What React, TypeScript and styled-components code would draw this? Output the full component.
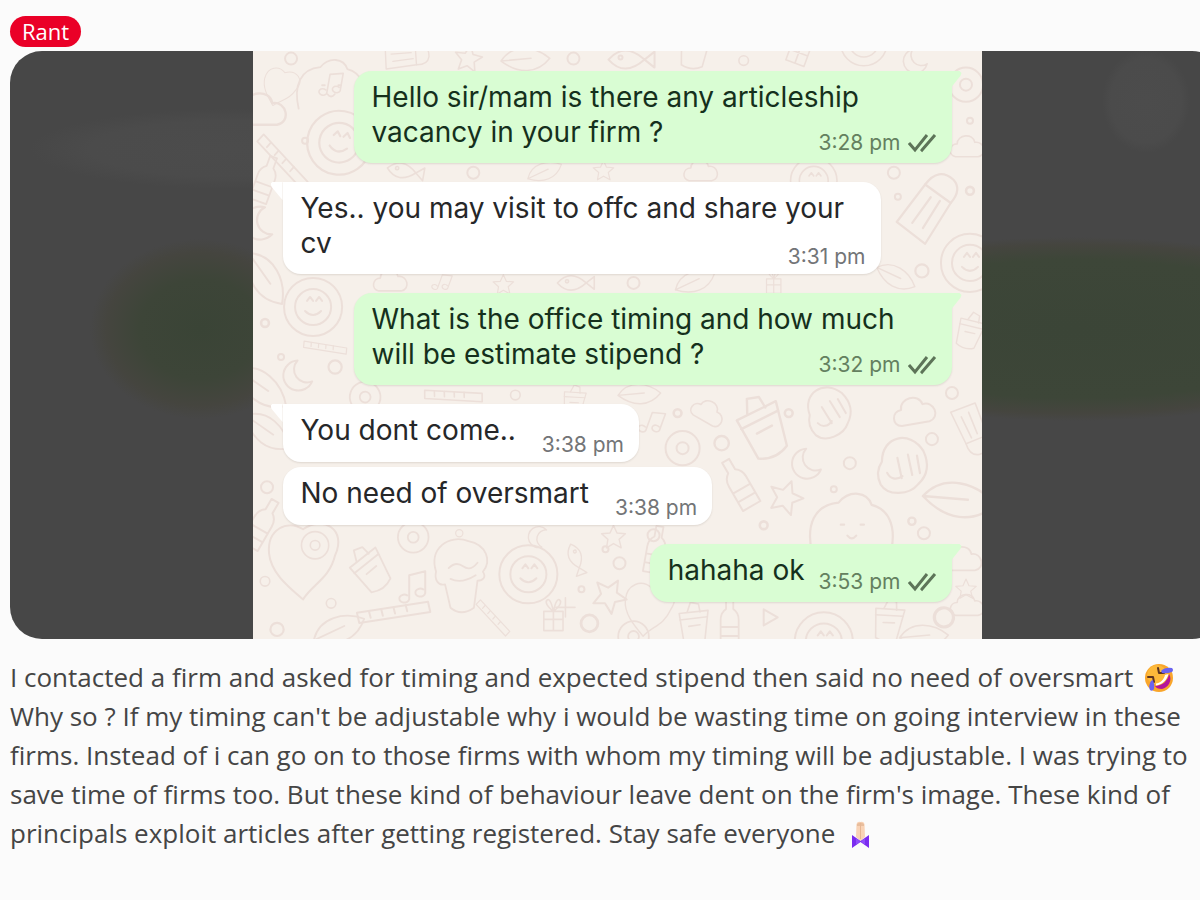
import React from "react";
import styled, { createGlobalStyle, css } from "styled-components";

const GlobalStyle = createGlobalStyle`
  * { box-sizing: border-box; }
  body {
    margin: 0;
    background: #fbfbfb;
    color: #454545;
    font-family: "Open Sans", "Noto Sans", sans-serif;
    overflow-x: hidden;
  }
`;

const Post = styled.article`
  display: flex;
  flex-direction: column;
  align-items: flex-start;
  padding: 16px 0 24px 10px;
`;

const Flair = styled.a`
  padding: 0 12px;
  margin-bottom: 4px;
  border-radius: 16px;
  background: #ea0027;
  color: #fff;
  font-size: 22px;
  line-height: 31px;
  text-decoration: none;
`;

const Media = styled.figure`
  display: flex;
  justify-content: center;
  width: calc(100% + 24px);
  margin: 0 0 19px;
  border-radius: 32px;
  overflow: hidden;
  background:
    radial-gradient(ellipse 110px 90px at 190px 278px, #3a4436 0%, #3d4538 55%, #45453f 85%, transparent 100%),
    radial-gradient(ellipse 330px 92px at calc(100% - 150px) 278px, #3b4537 0%, #3d4638 75%, #45453f 92%, transparent 100%),
    radial-gradient(ellipse 200px 40px at 220px 98px, #4c4c4c 0%, #4b4b4b 70%, transparent 100%),
    radial-gradient(ellipse 44px 52px at calc(100% - 78px) 50px, #4c4c4c 0%, #4b4b4b 80%, transparent 100%),
    #474747;
`;

const Chat = styled.div`
  position: relative;
  flex: 0 1 729px;
  display: flex;
  flex-direction: column;
  padding: 20px 30px 37px;
  background: #f6f0ea;
  font-family: Inter, "Open Sans", sans-serif;
`;

const Wallpaper = styled.svg`
  position: absolute;
  inset: 0;
  width: 100%;
  height: 100%;
  fill: none;
  stroke: #ecdfd9;
  stroke-width: 2;
  stroke-linecap: round;
  stroke-linejoin: round;
`;

const ownTail = css`
  border-top-right-radius: 0;
  &::after {
    content: "";
    position: absolute;
    top: 0;
    left: 100%;
    width: 10px;
    height: 16px;
    background: inherit;
    clip-path: polygon(0 0, 80% 0, 100% 12%, 90% 30%, 0 100%);
  }
`;

const theirTail = css`
  border-top-left-radius: 0;
  &::after {
    content: "";
    position: absolute;
    top: 0;
    right: 100%;
    width: 12px;
    height: 18px;
    background: inherit;
    clip-path: polygon(100% 0, 15% 0, 0 10%, 10% 28%, 100% 100%);
  }
`;

const Bubble = styled.div<{ $own?: boolean; $tail?: boolean; $long?: boolean; $follows?: boolean }>`
  position: relative;
  display: grid;
  grid-template-columns: ${(p) => (p.$long ? "1fr" : "auto auto")};
  column-gap: ${(p) => (p.$own ? 14 : 26)}px;
  align-self: ${(p) => (p.$own ? "flex-end" : "flex-start")};
  width: ${(p) => (p.$long ? "598px" : "auto")};
  max-width: 100%;
  min-height: 58px;
  margin-top: ${(p) => (p.$follows ? 5 : 19)}px;
  padding: 9px 15px 0 18px;
  border-radius: 18px;
  background: ${(p) => (p.$own ? "#d9fdd3" : "#ffffff")};
  box-shadow: 0 1px 2px rgba(60, 40, 30, 0.12);
  ${(p) => p.$tail && (p.$own ? ownTail : theirTail)}

  &:nth-of-type(1) { margin-top: 0; }
`;

const Message = styled.p<{ $long?: boolean; $own?: boolean }>`
  grid-area: 1 / 1;
  margin: 0;
  padding-bottom: ${(p) => (p.$long ? 13 : 0)}px;
  color: ${(p) => (p.$own ? "#15301c" : "#262729")};
  font-size: 28px;
  line-height: 35px;
`;

const Meta = styled.div<{ $long?: boolean; $own?: boolean }>`
  grid-area: ${(p) => (p.$long ? "1 / 1" : "1 / 2")};
  place-self: end;
  display: flex;
  align-items: center;
  gap: 7px;
  padding-bottom: ${(p) => (p.$own ? 8 : 5)}px;
  color: ${(p) => (p.$own ? "#64805f" : "#737577")};
  font-size: 21px;
  line-height: 24px;
`;

const Ticks = styled.svg`
  width: 29px;
  height: 20px;
  fill: none;
  stroke: #5d7458;
  stroke-width: 3;
`;

const Body = styled.p`
  margin: 0;
  font-size: 26px;
  line-height: 39px;
`;

const Line = styled.span`
  display: block;
  white-space: nowrap;
`;

const Emoji = styled.svg`
  width: 30px;
  height: 30px;
  margin-left: 4px;
  vertical-align: -6px;
`;

type Message = { own?: boolean; tail?: boolean; follows?: boolean; lines: string[]; time: string };

const messages: Message[] = [
  { own: true, tail: true, lines: ["Hello sir/mam is there any articleship", "vacancy in your firm ?"], time: "3:28 pm" },
  { tail: true, lines: ["Yes.. you may visit to offc and share your", "cv"], time: "3:31 pm" },
  { own: true, tail: true, lines: ["What is the office timing and how much", "will be estimate stipend ?"], time: "3:32 pm" },
  { tail: true, lines: ["You dont come.."], time: "3:38 pm" },
  { follows: true, lines: ["No need of oversmart"], time: "3:38 pm" },
  { own: true, tail: true, lines: ["hahaha ok"], time: "3:53 pm" },
];

// Each doodle is drawn round its own origin and placed by [name, x, y, rotation, scale].
const doodles: Record<string, React.ReactNode> = {
  ring: <><circle r="29" /><circle r="18" /><path d="M-8 4q8 8 16 0M-6-6l3-4 3 4M3-6l3-4 3 4" /></>,
  target: <><circle r="17" /><circle r="6" /></>,
  dot: <circle r="6" />,
  speck: <circle r="3" />,
  hand: <><path d="M-20-2c-8-22 14-36 32-22 8 8 12 18 6 30-4 12-22 20-32 12-6-6-8-12-6-20Z" /><path d="M-8-10l10 16M0-16l10 16M8-18l8 14M-12 6c4 4 10 4 14-2" /></>,
  moon: <path d="M-4-14a15 15 0 1 0 18 18a13 13 0 0 1-18-18Z" />,
  star: <path d="M0-17l5 11 12 1-9 8 3 12-11-6-10 6 2-12-9-8 12-1Z" />,
  cup: <><path d="M-18-16l36-4-4 38q-12 8-26 2Z" /><path d="M-17-8l34-4M-8-18l4-12 10 2 2 10M-6 0l14-2" /></>,
  box: <><path d="M-28-14L14-22l6 28-42 12Z" /><path d="M14-22q20-4 22 14 0 12-16 14M-18-4l28-6M-14 6l28-8" /></>,
  tooth: <path d="M0-34c20-14 44 0 32 26C26 16 10 20 0 36c-14-12-32-26-34-46-2-24 18-34 34-24Z" />,
  cat: <><path d="M-36 20c-6-26 2-44 24-46 10-12 26-10 30 2 16 4 22 20 18 40" /><path d="M-10-6h3M8-6h3M-4 4q4 5 8 0" /></>,
  cloud: <path d="M-18 10c-10-2-8-16 2-16 0-12 20-14 22-2 12-2 16 16 4 18Z" />,
  leaf: <path d="M-26 10C-20-16 8-22 30-14 22 10 0 18-26 10ZM-26 10l34-16" />,
  ruler: <><path d="M-36 4L34-12l3 10-70 16Z" /><path d="M-24 2l2 6M-12-1l2 6M0-4l2 6M12-7l2 6" /></>,
  gift: <path d="M-12-10h24v24h-24zM-12 0h24M0-10v24M0-10q-12-10-8-14t8 14q12-10 8-14t-8 14" />,
  note: <path d="M-6 12V-12l16-4v22M-6 12a5 4 0 1 1-2-4M10 6a5 4 0 1 1-2-4" />,
  bottle: <path d="M-10 24V-4q0-8 6-12v-12h8v12q6 4 6 12v28ZM-10 4h20M-10 14h20" />,
  fish: <><path d="M-20 0Q-4-18 16 0q-20 18-36 0ZM16 0l10-8v16Z" /><circle cx="-8" cy="-2" r="2" /></>,
  play: <path d="M-6-8L8 0-6 8Z" />,
  plus: <path d="M0-12v24M-12 0h24" />,
  muffin: <><path d="M-28-4c-8-26 14-42 36-34 20 4 26 22 16 34 4 6 0 10-6 10l-4 30q-14 10-26 0l-6-26c-8 2-12-6-10-14Z" /><path d="M-14-8q8-8 16-2t16-4M-12 4q12 6 28-4" /></>,
};

const placed: [string, number, number, number, number][] = [
  ["dot", 38, 8, 0, 1], ["tooth", 26, 38, 20, 0.5], ["cat", 78, 40, 0, 0.9], ["note", 80, 34, 10, 0.8],
  ["ring", 86, 92, 10, 1.1], ["cloud", 12, 62, 0, 1.2], ["ruler", 30, 110, 60, 0.9], ["speck", 52, 90, 0, 1],
  ["bottle", 12, 130, 20, 0.9], ["moon", 8, 172, 30, 1.1], ["leaf", 10, 226, 80, 1], ["box", 150, 8, 8, 0.7],
  ["star", 215, 8, 10, 0.8], ["leaf", 270, 10, 20, 0.8], ["dot", 320, 8, 0, 1], ["fish", 375, 9, 0, 1],
  ["cup", 440, 0, 10, 0.8], ["dot", 490, 10, 0, 0.8], ["gift", 545, 2, 20, 0.8], ["ring", 610, -8, 0, 0.8],
  ["moon", 662, 10, 0, 0.8], ["target", 712, 34, 0, 1], ["speck", 716, 70, 0, 1], ["cloud", 716, 98, 0, 0.8],
  ["box", 676, 162, -42, 1.1], ["dot", 640, 122, 0, 1], ["speck", 644, 146, 0, 1], ["ring", 716, 212, 0, 1],
  ["dot", 668, 220, 0, 1.1], ["leaf", 640, 226, 50, 0.7], ["cup", 715, 282, 20, 0.7], ["speck", 716, 140, 0, 1.3],
  ["fish", 150, 120, 10, 0.8], ["dot", 220, 122, 0, 1], ["leaf", 290, 122, 0, 0.6], ["star", 350, 120, 0, 0.6],
  ["ring", 560, 130, 0, 0.8], ["cloud", 450, 122, 0, 0.8],
  ["ring", 60, 256, 0, 1], ["speck", 12, 272, 0, 1.3], ["ruler", 72, 296, 22, 0.6], ["moon", 46, 324, 10, 1],
  ["dot", 82, 316, 0, 1.1], ["speck", 28, 306, 0, 1], ["leaf", 6, 336, 60, 1], ["target", 112, 346, 20, 0.9],
  ["cloud", 140, 232, 0, 0.8], ["note", 190, 232, 20, 0.6], ["star", 250, 234, 0, 0.6], ["fish", 320, 232, 0, 0.8],
  ["dot", 380, 232, 0, 1], ["leaf", 440, 232, 0, 0.7], ["gift", 520, 234, 0, 0.6], ["ruler", 200, 344, 16, 0.8],
  ["dot", 262, 344, 0, 0.8], ["cup", 320, 352, 10, 0.6], ["leaf", 384, 344, 20, 0.7],
  ["speck", 424, 362, 0, 1.3], ["cloud", 456, 364, 30, 0.8], ["cup", 510, 380, -20, 1.2], ["hand", 576, 366, 0, 1],
  ["cloud", 664, 362, -10, 1], ["dot", 678, 388, 0, 1], ["dot", 698, 342, 0, 1], ["note", 400, 372, 20, 0.8],
  ["target", 429, 397, 0, 1], ["dot", 468, 392, 0, 1.2], ["moon", 554, 412, 10, 1], ["dot", 596, 412, 0, 1],
  ["speck", 535, 362, 0, 1.3], ["hand", 648, 420, 20, 1.1], ["leaf", 702, 450, 30, 1.2], ["speck", 580, 438, 0, 1],
  ["star", 532, 446, 20, 1], ["cat", 598, 480, 0, 1.1], ["speck", 658, 470, 0, 1.2], ["dot", 670, 482, 0, 1],
  ["bottle", 486, 434, -30, 1], ["speck", 510, 474, 0, 1.3], ["dot", 400, 484, 0, 1], ["box", 714, 376, 80, 0.8],
  ["leaf", 12, 380, 60, 0.9], ["dot", 14, 436, 0, 1], ["bottle", 8, 474, 30, 1], ["cloud", 712, 510, 0, 0.9],
  ["target", 62, 494, 0, 0.8], ["tooth", 50, 512, 0, 1], ["cup", 118, 520, -32, 0.9], ["target", 160, 486, 0, 0.9],
  ["note", 162, 536, 0, 1], ["dot", 78, 552, 0, 0.8], ["ruler", 140, 560, 4, 1], ["muffin", 208, 524, 0, 0.9],
  ["dot", 206, 482, 0, 0.6], ["ring", 275, 523, 0, 1], ["fish", 322, 506, 70, 0.7], ["dot", 366, 512, 0, 1],
  ["speck", 352, 498, 0, 1], ["speck", 328, 538, 0, 1], ["star", 356, 544, 30, 1], ["gift", 300, 568, 0, 0.8],
  ["dot", 336, 572, 0, 1.4], ["plus", 312, 556, 0, 0.8], ["ruler", 240, 566, 60, 0.6], ["leaf", 84, 580, 0, 0.9],
  ["dot", 24, 578, 0, 1.1], ["dot", 12, 530, 0, 0.8], ["star", 360, 486, 0, 0.7], ["moon", 286, 486, 60, 0.7],
  ["tooth", 394, 560, 10, 0.7], ["bottle", 402, 500, 10, 0.9], ["cup", 440, 575, 0, 0.8], ["target", 380, 585, 0, 0.9],
  ["bottle", 476, 572, 0, 0.9], ["play", 516, 566, 0, 1], ["ring", 570, 590, 0, 1], ["cup", 634, 572, 10, 0.8],
  ["dot", 690, 566, 30, 1.6], ["cloud", 716, 556, 0, 0.8], ["leaf", 668, 586, 20, 0.8], ["star", 712, 538, 0, 0.6],
];

function Doodles() {
  return (
    <Wallpaper viewBox="0 0 728 588" preserveAspectRatio="xMidYMid slice" aria-hidden="true">
      {placed.map(([name, x, y, turn, scale], i) => (
        <g key={i} transform={`translate(${x} ${y}) rotate(${turn}) scale(${scale})`}>
          {doodles[name]}
        </g>
      ))}
    </Wallpaper>
  );
}

function RollingLaugh() {
  return (
    <Emoji viewBox="0 0 30 30" role="img" aria-label="🤣">
      <circle cx="15" cy="15" r="14" fill="#f9a62b" />
      <circle cx="13" cy="12" r="10" fill="#fdb93a" />
      <path d="M11 23C18 23 24 18 25 11c4 6-1 14-7 15-4 0-6-1-7-3Z" fill="#b4149a" />
      <path d="M12 22.500C18 22 23 17 24.500 11l-3.500 1c-1 5-5 8-9 8.500Z" fill="#fff" />
      <path d="M14 5l1 5 5 0M4 14l5 0 1 5" fill="none" stroke="#5c3320" strokeWidth="2" strokeLinecap="round" strokeLinejoin="round" />
      <path d="M17 8q4-4 11-3q2 2 0 4q-6 2-10 1Z" fill="#6a63f0" />
      <path d="M9 17q2 5 1 9q-2 3-4 1q-2-4 1-9Z" fill="#6a63f0" />
    </Emoji>
  );
}

function FoldedHands() {
  return (
    <Emoji viewBox="0 0 30 30" role="img" aria-label="🙏🏻">
      <path d="M14.500 3q-3-1-4 2L10 18l4.500 4L19 18 18.500 5q-1-3-4-2Z" fill="#f9d3b6" />
      <path d="M11 5q3.500-3 7 0l0 2h-7Z" fill="#e8bd9c" />
      <path d="M14.500 4v16" stroke="#e6b693" strokeWidth="1" />
      <path d="M6 16l8.500 6L23 16v13l-8.500-6L6 29Z" fill="#7a2cf0" />
      <path d="M10 19v7l4-3.500ZM19 19v7l-4-3.500Z" fill="#8f4dfa" />
    </Emoji>
  );
}

export default function App() {
  return (
    <>
      <GlobalStyle />
      <Post>
        <Flair href="#rant">Rant</Flair>
        <Media>
          <Chat>
            <Doodles />
            {messages.map(({ own, tail, follows, lines, time }, i) => {
              const long = lines.length > 1;
              return (
                <Bubble key={i} $own={own} $tail={tail} $long={long} $follows={follows}>
                  <Message $own={own} $long={long}>
                    {lines.map((text) => (
                      <Line key={text}>{text}</Line>
                    ))}
                  </Message>
                  <Meta $own={own} $long={long}>
                    <time>{time}</time>
                    {own && (
                      <Ticks viewBox="0 0 29 20" role="img" aria-label="Delivered">
                        <path d="M1 10l6 7L19 2M13 16l1 1L27 2" />
                      </Ticks>
                    )}
                  </Meta>
                </Bubble>
              );
            })}
          </Chat>
        </Media>
        <Body>
          <Line>
            I contacted a firm and asked for timing and expected stipend then said no need of oversmart <RollingLaugh />
          </Line>
          <Line>Why so ? If my timing can't be adjustable why i would be wasting time on going interview in these</Line>
          <Line>firms. Instead of i can go on to those firms with whom my timing will be adjustable. I was trying to</Line>
          <Line>save time of firms too. But these kind of behaviour leave dent on the firm's image. These kind of</Line>
          <Line>
            principals exploit articles after getting registered. Stay safe everyone <FoldedHands />
          </Line>
        </Body>
      </Post>
    </>
  );
}
